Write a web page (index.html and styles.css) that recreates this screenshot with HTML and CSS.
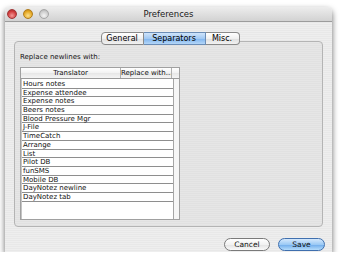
FILE: index.html
```html
<!DOCTYPE html>
<html lang="en">
<head>
    <meta charset="UTF-8">
    <title>Preferences</title>
    <link rel="stylesheet" href="styles.css">
</head>
<body>

<div class="window">
    <!-- Title bar -->
    <div class="titlebar">
        <div class="lights">
            <span class="light close"></span>
            <span class="light mini"></span>
            <span class="light zoom"></span>
        </div>
        <div class="title">Preferences</div>
        <div></div>
    </div>

    <div class="content">
        <div class="tabs">
            <span class="tab tab-general">General</span>
            <span class="tab tab-sep active">Separators</span>
            <span class="tab tab-misc">Misc.</span>
        </div>

        <div class="group">
            <div class="label">Replace newlines with:</div>
            <div class="table">
                <div class="thead">
                    <span class="th">Translator</span>
                    <span class="th">Replace with...</span>
                    <span class="th"></span>
                </div>
                <div class="tbody">
                    <div class="rows">
                        <div class="row">Hours notes</div>
                        <div class="row">Expense attendee</div>
                        <div class="row">Expense notes</div>
                        <div class="row">Beers notes</div>
                        <div class="row">Blood Pressure Mgr</div>
                        <div class="row">J-File</div>
                        <div class="row">TimeCatch</div>
                        <div class="row">Arrange</div>
                        <div class="row">List</div>
                        <div class="row">Pilot DB</div>
                        <div class="row">funSMS</div>
                        <div class="row">Mobile DB</div>
                        <div class="row">DayNotez newline</div>
                        <div class="row">DayNotez tab</div>
                    </div>
                    <div class="scroll"></div>
                </div>
            </div>
        </div>

        <div class="buttons">
            <span class="btn">Cancel</span>
            <span class="btn default">Save</span>
        </div>
    </div>
</div>

</body>
</html>
```

FILE: styles.css
```css
body {
    margin: 0;
    background-color: #fff;
    font-family: "DejaVu Sans", sans-serif;
    color: #111;
}
.window {
    margin: 7px 0 0 5px;
    width: 327px;
    height: 245px;
    border-radius: 5px 5px 0 0;
    box-shadow: 0 3px 6px rgba(0, 0, 0, 0.6);
    background: repeating-linear-gradient(#eeeeee 0 1px, #e8e8e8 1px 2px);
    display: flex;
    flex-direction: column;
}
.titlebar {
    height: 14px;
    border-bottom: 1px solid #9c9c9c;
    border-radius: 5px 5px 0 0;
    background: linear-gradient(#ededed, #d2d2d2);
    display: grid;
    grid-template-columns: 1fr auto 1fr;
    align-items: center;
}
.lights {
    display: flex;
    gap: 6px;
    padding-left: 2px;
}
.light {
    width: 10px;
    height: 10px;
    border-radius: 50%;
    box-sizing: border-box;
}
.close {
    background: radial-gradient(circle at 50% 70%, #f49a98, #d13d3d 60%, #9c2a2a);
    border: 1px solid #a03636;
}
.mini {
    background: radial-gradient(circle at 50% 70%, #fbe08f, #e5a823 60%, #b47c18);
    border: 1px solid #b07c1c;
}
.zoom {
    background: radial-gradient(circle at 50% 70%, #f4f4f4, #cdcdcd 60%, #a8a8a8);
    border: 1px solid #a6a6a6;
}
.title {
    font-size: 8.5px;
    color: #1a1a1a;
}
.content {
    flex: 1;
    display: flex;
    flex-direction: column;
    padding: 0 9px;
}
.tabs {
    margin-top: 10px;
    height: 13px;
    display: flex;
    justify-content: center;
    position: relative;
    z-index: 1;
    padding-left: 3px;
}
.tab {
    box-sizing: border-box;
    height: 13px;
    font-size: 8px;
    line-height: 11px;
    text-align: center;
    color: #000;
    border: 1px solid #8a8a8a;
    border-left: none;
    background: linear-gradient(#ffffff, #f0f0f0 50%, #dedede 51%, #f2f2f2);
}
.tab-general {
    width: 43px;
    border-left: 1px solid #8a8a8a;
    border-radius: 4px 0 0 4px;
}
.tab-sep {
    width: 62px;
}
.tab-misc {
    width: 34px;
    border-radius: 0 4px 4px 0;
}
.tab.active {
    background: linear-gradient(#cfe4fb, #a2c9f3 50%, #7db3ee 51%, #b4d6f8);
    border-color: #6b8db6;
}
.group {
    margin-top: -4px;
    height: 186px;
    box-sizing: border-box;
    border: 1px solid #b4b4b4;
    border-radius: 4px;
    background: repeating-linear-gradient(#e6e6e6 0 1px, #e1e1e1 1px 2px);
    padding: 10px 0 0 5px;
}
.label {
    font-size: 7px;
    line-height: 10px;
    margin-bottom: 5px;
}
.table {
    width: 160px;
    height: 153px;
    box-sizing: border-box;
    border: 1px solid #a0a0a0;
    background-color: #fff;
    display: flex;
    flex-direction: column;
}
.thead {
    height: 10px;
    border-bottom: 1px solid #9a9a9a;
    display: grid;
    grid-template-columns: 100px 51px 1fr;
    background: linear-gradient(#ffffff, #f1f1f1 50%, #e6e6e6 51%, #f4f4f4);
}
.th {
    font-size: 7px;
    line-height: 10px;
    text-align: center;
    border-right: 1px solid #b0b0b0;
    white-space: nowrap;
    overflow: hidden;
}
.th:last-child {
    border-right: none;
}
.tbody {
    flex: 1;
    display: flex;
}
.rows {
    width: 151px;
    border-right: 1px solid #a6a6a6;
    border-left: 1px solid #c4c4c4;
    padding-top: 1px;
}
.row {
    box-sizing: border-box;
    height: 8.7px;
    border-bottom: 1px solid #8e8e8e;
    font-size: 7px;
    line-height: 8px;
    padding-left: 1px;
    white-space: nowrap;
}
.scroll {
    flex: 1;
    background-color: #f6f6f6;
}
.buttons {
    margin-top: 11px;
    margin-right: -2px;
    display: flex;
    justify-content: flex-end;
    gap: 8px;
}
.btn {
    box-sizing: border-box;
    width: 46px;
    height: 13px;
    border-radius: 7px;
    border: 1px solid #7a7a7a;
    background: linear-gradient(#ffffff, #f2f2f2 50%, #e2e2e2 51%, #fafafa);
    font-size: 7.5px;
    line-height: 11px;
    text-align: center;
}
.btn.default {
    width: 47px;
    border-color: #3f6fae;
    background: linear-gradient(#d4e8fc, #9ccaf5 50%, #6eabeb 51%, #b5dcfb);
}
```
